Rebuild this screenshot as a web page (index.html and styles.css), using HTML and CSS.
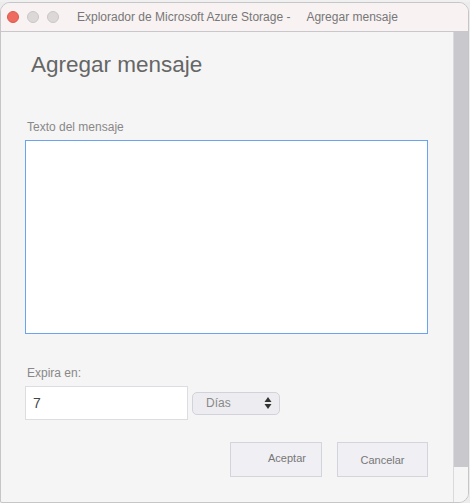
FILE: index.html
```html
<!DOCTYPE html>
<html lang="es">
<head>
<meta charset="utf-8">
<title>Agregar mensaje</title>
<link rel="stylesheet" href="styles.css">
</head>
<body>
<div class="backdrop"></div>
<div class="window">
  <div class="titlebar">
    <span class="light red"></span>
    <span class="light gray"></span>
    <span class="light gray"></span>
    <span class="title">Explorador de Microsoft Azure Storage -</span>
    <span class="title title-sub">Agregar mensaje</span>
  </div>
  <div class="body">
    <div class="content">
      <h1 class="heading">Agregar mensaje</h1>
      <label class="label label-msg" for="msg">Texto del mensaje</label>
      <textarea id="msg" class="msg"></textarea>
      <label class="label label-exp" for="exp">Expira en:</label>
      <div class="exp-row">
        <input id="exp" class="exp-input" type="text" value="7">
        <div class="select">
          <span class="select-text">Días</span>
          <svg class="select-arrows" width="8" height="14" viewBox="0 0 8 14">
            <path d="M4 1 L7.5 6 L0.5 6 Z" fill="#333"/>
            <path d="M4 13 L7.5 8 L0.5 8 Z" fill="#333"/>
          </svg>
        </div>
      </div>
      <div class="actions">
        <button class="btn btn-ok">Aceptar</button>
        <button class="btn btn-cancel">Cancelar</button>
      </div>
    </div>
    <div class="scrollbar">
      <div class="thumb"></div>
    </div>
  </div>
</div>
</body>
</html>
```
FILE: styles.css
```css
* { box-sizing: border-box; }
html, body {
  margin: 0;
  padding: 0;
  width: 470px;
  height: 503px;
  overflow: hidden;
  background: #ececec;
  font-family: "Liberation Sans", Arial, sans-serif;
}
.backdrop {
  height: 2px;
  background: #f0f0f0;
}
.window {
  width: 469px;
  height: 501px;
  border: 1px solid #c6c6c8;
  border-radius: 10px 10px 10px 2px;
  background: #f5f5f5;
  overflow: hidden;
  display: flex;
  flex-direction: column;
}
.titlebar {
  height: 29px;
  flex: none;
  background: #f8f2f2;
  border-bottom: 1px solid #c8c8cc;
  display: flex;
  align-items: center;
  padding-left: 6px;
  padding-bottom: 1px;
}
.light {
  width: 12px;
  height: 12px;
  border-radius: 50%;
  margin-right: 8px;
  flex: none;
}
.red {
  background: #ee6b60;
  border: 1px solid #e0574c;
}
.gray {
  background: #dcd8d8;
  border: 1px solid #cbc6c6;
}
.title {
  font-size: 12px;
  color: #777;
  margin-left: 10px;
  white-space: nowrap;
}
.title-sub {
  margin-left: 16px;
}
.body {
  flex: 1;
  display: flex;
  min-height: 0;
}
.content {
  flex: 1;
  display: flex;
  flex-direction: column;
  padding: 20px 25px 0 24px;
}
.heading {
  margin: 0 0 0 6px;
  font-size: 22.5px;
  line-height: 26px;
  font-weight: normal;
  color: #666;
}
.label {
  font-size: 12px;
  line-height: 14px;
  color: #888;
  margin-left: 2px;
}
.label-msg {
  margin-top: 42px;
}
.msg {
  margin-top: 6px;
  width: 403px;
  height: 194px;
  border: 1px solid #68a4f0;
  background: #fff;
  resize: none;
  outline: none;
  padding: 4px;
  font-family: inherit;
}
.label-exp {
  margin-top: 32px;
}
.exp-row {
  margin-top: 6px;
  display: flex;
  align-items: center;
  gap: 4px;
}
.exp-input {
  width: 163px;
  height: 34px;
  border: 1px solid #dcdce2;
  background: #fff;
  padding: 0 0 0 7px;
  font-family: inherit;
  font-size: 14px;
  color: #444;
  outline: none;
}
.select {
  width: 88px;
  height: 23px;
  border: 1px solid #d2d2da;
  border-radius: 5px;
  background: #ededf1;
  display: flex;
  align-items: center;
  justify-content: space-between;
  padding: 0 7px 0 13px;
}
.select-text {
  font-size: 12px;
  color: #888;
}
.select-arrows {
  display: block;
}
.actions {
  margin-top: 22px;
  display: flex;
  justify-content: flex-end;
  gap: 15px;
}
.btn {
  height: 35px;
  border: 1px solid #d4d4dc;
  background: #f0eff4;
  font-family: inherit;
  font-size: 11px;
  color: #777;
  padding: 0;
  border-radius: 0;
}
.btn-ok {
  width: 92px;
  padding-left: 22px;
  padding-bottom: 3px;
}
.btn-cancel {
  width: 91px;
}
.scrollbar {
  width: 15px;
  flex: none;
  border-left: 1px solid #dadade;
  background: #f5f5f5;
  display: flex;
  flex-direction: column;
}
.thumb {
  height: 435px;
  background: #c9c9cd;
}
```
